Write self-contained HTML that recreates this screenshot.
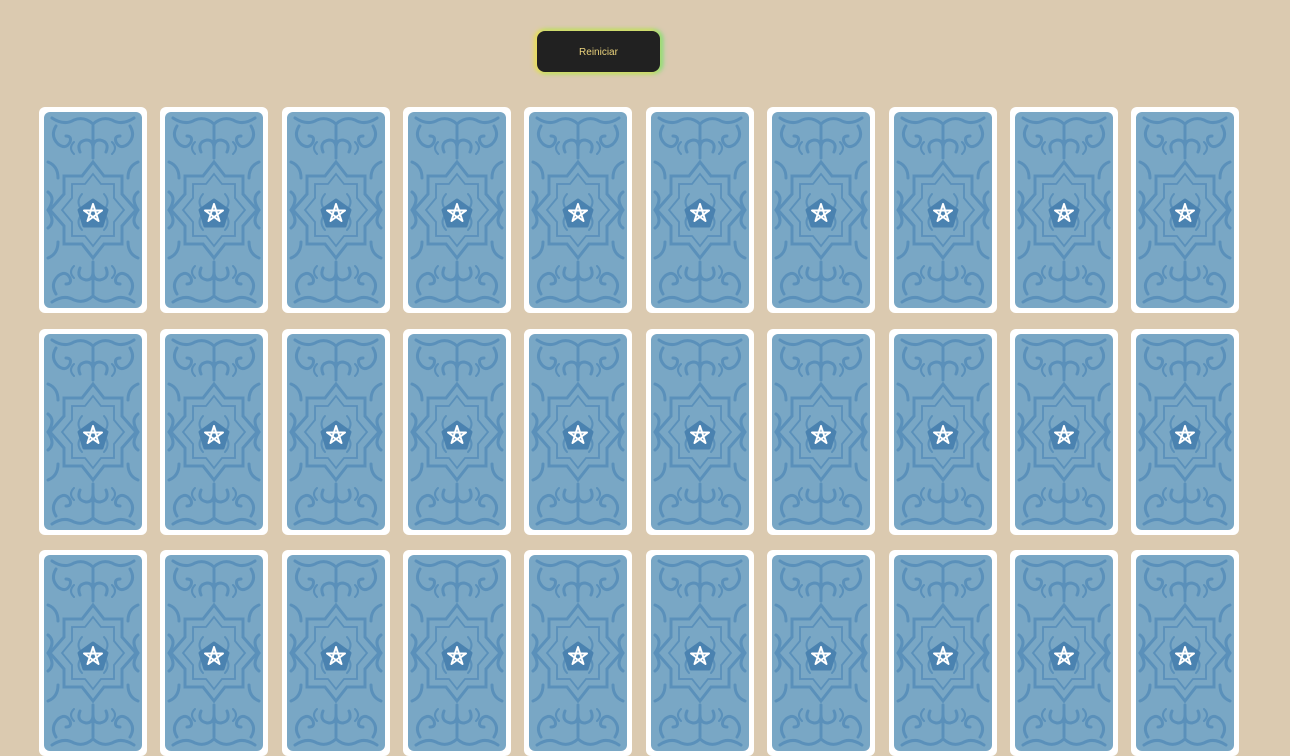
<!DOCTYPE html>
<html><head><meta charset="utf-8"><style>
html,body{margin:0;padding:0;background:#dbcab0;width:1290px;height:620px;overflow:hidden;font-family:"Liberation Sans",sans-serif;}
.btn{position:absolute;left:537px;top:31px;width:123px;height:41px;background:#212121;border-radius:8px;color:#ead27c;font-size:10px;display:flex;align-items:center;justify-content:center;padding-top:1px;box-sizing:border-box;box-shadow:-2px 0 5px 1px #f0dc60,2px 0 5px 1px #7ddc80,0 -1px 4px #c9dc6a,0 1px 4px #c9dc6a;}
.card{position:absolute;width:108px;height:206px;background:#fff;border-radius:6px;}
.card svg{position:absolute;left:5px;top:5px;}
</style></head><body>
<div class="btn">Reiniciar</div>
<svg width="0" height="0" style="position:absolute">
<defs>
<symbol id="back" viewBox="0 0 98 196">
<rect width="98" height="196" rx="6" fill="#79a7c5"/>
<g fill="none" stroke="#5a90ba" stroke-width="3" stroke-linecap="round">
<path d="M49 50 L60 64 L78 64 L78 82 L92 98 L78 114 L78 132 L60 132 L49 146 L38 132 L20 132 L20 114 L6 98 L20 82 L20 64 L38 64 Z"/>
<path d="M49 62 L57 72 L70 72 L70 86 L80 98 L70 110 L70 124 L57 124 L49 134 L41 124 L28 124 L28 110 L18 98 L28 86 L28 72 L41 72 Z" stroke-width="1.8"/>
<path d="M8 6 Q20 14 30 8 Q40 4 49 12 Q58 4 68 8 Q78 14 90 6"/>
<path d="M8 190 Q20 182 30 188 Q40 192 49 184 Q58 192 68 188 Q78 182 90 190"/>
<path d="M12 14 q-6 10 2 18 q8 6 12 -2 q2 -6 -4 -6"/>
<path d="M86 14 q6 10 -2 18 q-8 6 -12 -2 q-2 -6 4 -6"/>
<path d="M12 182 q-6 -10 2 -18 q8 -6 12 2 q2 6 -4 6"/>
<path d="M86 182 q6 -10 -2 -18 q-8 -6 -12 2 q-2 6 4 6"/>
<path d="M49 14 L49 46 M49 150 L49 182"/>
<path d="M36 40 q-4 -10 6 -12 q7 0 7 8 q0 -8 7 -8 q10 2 6 12"/>
<path d="M36 156 q-4 10 6 12 q7 0 7 -8 q0 8 7 8 q10 -2 6 -12"/>
<path d="M4 50 q10 4 10 16 M94 50 q-10 4 -10 16 M4 146 q10 -4 10 -16 M94 146 q-10 -4 -10 -16"/>
<path d="M4 80 q8 6 0 18 q8 12 0 18 M94 80 q-8 6 0 18 q-8 12 0 18"/>
<path d="M38 82 q-7 8 0 16 M60 82 q7 8 0 16 M38 118 q-7 -8 0 -16 M60 118 q7 -8 0 -16" stroke-width="2"/>
<path d="M30 30 q-6 6 0 12 M68 30 q6 6 0 12 M30 166 q-6 -6 0 -12 M68 166 q6 -6 0 -12" stroke-width="2"/>
</g>
<g transform="translate(0,4)">
<path d="M49 84 L63 94 L58 110 L40 110 L35 94 Z" fill="#4a82b0" stroke="#4a82b0" stroke-width="3" stroke-linejoin="round"/>
<path d="M49 88 L54.5 105 L40 94.5 L58 94.5 L43.5 105 Z" fill="none" stroke="#fff" stroke-width="2" stroke-linejoin="round"/>
</g>
</symbol>
</defs></svg>
<div id="g"></div>
<script>
var xs=[39,160,282,403,524,646,767,889,1010,1131],ys=[107,329,550],h='';
ys.forEach(function(y){xs.forEach(function(x){h+='<div class="card" style="left:'+x+'px;top:'+y+'px"><svg width="98" height="196"><use href="#back"/></svg></div>';});});
document.getElementById('g').innerHTML=h;
</script>
</body></html>
